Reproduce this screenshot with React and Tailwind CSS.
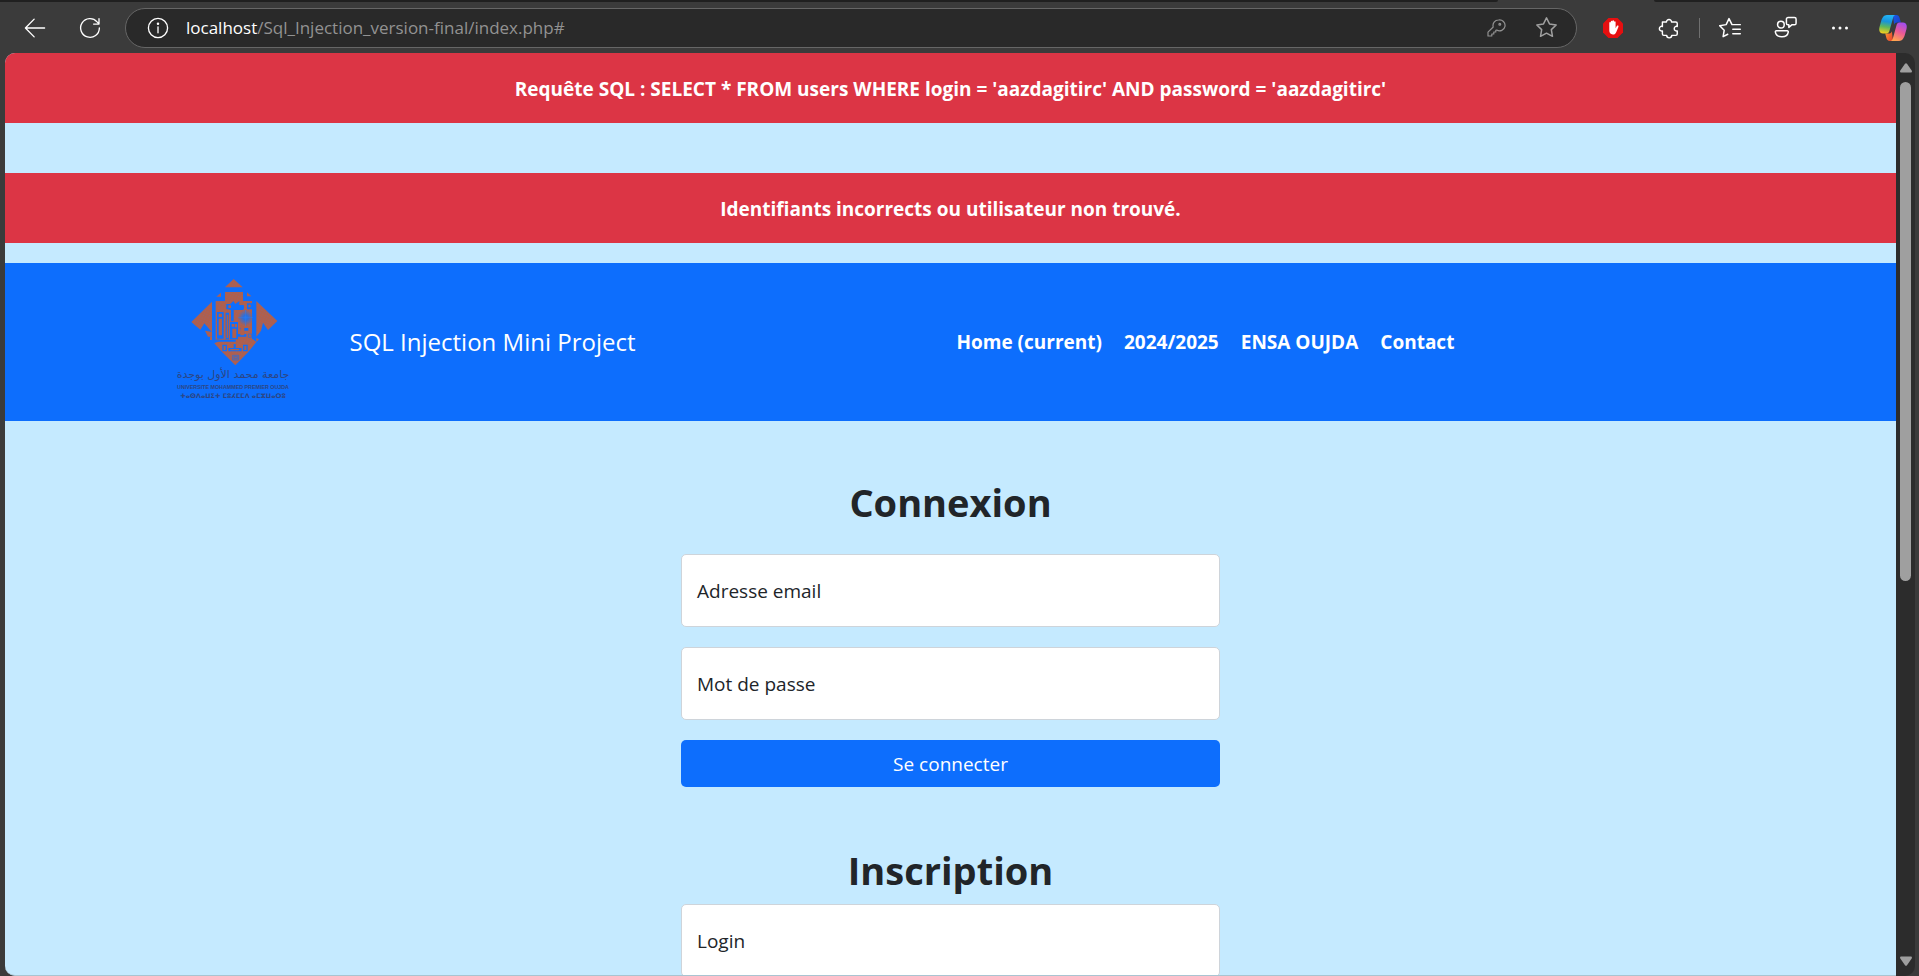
const SANS = "font-['Segoe_UI','Open_Sans','Noto_Sans',sans-serif]";

function IconButton({ label, className = "", children }) {
  return (
    <button type="button" aria-label={label} className={"flex size-8 items-center justify-center text-white " + className}>
      {children}
    </button>
  );
}

function Line({ size = 20, children, width = 1.3, className = "" }) {
  return (
    <svg width={size} height={size} viewBox="0 0 20 20" fill="none" stroke="currentColor" strokeWidth={width} strokeLinecap="round" strokeLinejoin="round" className={className} aria-hidden="true">
      {children}
    </svg>
  );
}

function Copilot() {
  return (
    <svg width="30" height="28" viewBox="0 0 30 28" aria-hidden="true">
      <defs>
        <linearGradient id="cp-a" x1="0.5" y1="0" x2="0.35" y2="1">
          <stop offset="0" stopColor="#23b4f5" />
          <stop offset="0.35" stopColor="#1793dc" />
          <stop offset="0.65" stopColor="#5fb85a" />
          <stop offset="1" stopColor="#f6cf1e" />
        </linearGradient>
        <linearGradient id="cp-b" x1="0" y1="0" x2="1" y2="1">
          <stop offset="0" stopColor="#1b57e8" />
          <stop offset="1" stopColor="#1a3fc4" />
        </linearGradient>
        <linearGradient id="cp-c" x1="0.7" y1="0" x2="0.3" y2="1">
          <stop offset="0" stopColor="#a24df0" />
          <stop offset="0.5" stopColor="#ec5a94" />
          <stop offset="1" stopColor="#ffa64e" />
        </linearGradient>
        <linearGradient id="cp-d" x1="0" y1="0" x2="1" y2="0.6">
          <stop offset="0" stopColor="#ff9a2e" />
          <stop offset="1" stopColor="#e9482f" />
        </linearGradient>
      </defs>
      <path d="M15 1h3.2c2 0 2.900 1.200 3.400 2.900l1.300 4.600h-3.700c-1.600 0-2.600.7-3.100 2.300z" fill="url(#cp-b)" />
      <path d="M15 27h-3.200c-2 0-2.900-1.200-3.400-2.900L7.200 19.500h3.600c1.600 0 2.600-.7 3.100-2.300z" fill="url(#cp-d)" />
      <path d="M17.200 1H8.900C5.800 1 4.200 3.800 3.200 7L1.500 13c-.9 3.500.2 6.500 3.400 6.500h3.700c1.500 0 2.400-1 2.800-2.500l3.500-12.600C15.400 2.500 16 1.300 17.200 1z" fill="url(#cp-a)" />
      <path d="M12.800 27h8.300c3.100 0 4.700-2.800 5.700-6l1.700-6c.9-3.500-.2-6.500-3.400-6.500h-3.700c-1.500 0-2.400 1-2.800 2.500l-3.500 12.600c-.5 1.900-1.100 3.100-2.300 3.400z" fill="url(#cp-c)" />
    </svg>
  );
}

function BrowserBar() {
  return (
    <header className="shrink-0 bg-[#3b3b3b]">
      <div className="flex h-[2px]">
        <div className="flex-1 rounded-br bg-[#202020]" />
        <div className="w-[156px]" />
        <div className="w-[265px] rounded-bl bg-[#202020]" />
      </div>
      <div className="flex h-[51px] items-center pr-[10px] pl-[19px]">
        <IconButton label="Retour">
          <Line size={24} width={1.1}><path d="M9.300 2.600 2 10l7.300 7.400M2.200 10H18" /></Line>
        </IconButton>
        <IconButton label="Actualiser" className="ml-[23px]">
          <Line size={24} width={1.1}><path d="M17.800 10A7.800 7.800 0 1 1 15.900 4.900L17.500 6.600M17.500 2.200v4.500h-4.500" /></Line>
        </IconButton>
        <div className="ml-[19px] flex h-10 min-w-0 flex-1 items-center rounded-full border border-[#666] bg-[#292929] pr-[14px] pl-4">
          <button type="button" aria-label="Informations sur le site" className="flex size-8 items-center justify-center text-white">
            <Line size={24} width={1.1}>
              <circle cx="10" cy="10" r="8" />
              <path d="M10 9v5" />
              <circle cx="10" cy="6.500" r="0.500" fill="currentColor" />
            </Line>
          </button>
          <div className="ml-3 min-w-0 flex-1 truncate text-[17px] leading-6 text-[#929292]">
            <span className="text-white">localhost</span>/Sql_Injection_version-final/index.php#
          </div>
          <IconButton label="Mots de passe" className="text-[#929292]!">
            <Line width={1.200}>
              <path d="M12.500 2a5.500 5.500 0 0 0-5.300 7L2 14.200V18h3.800v-2h2v-2h2v-1.600l.9-.3A5.500 5.500 0 1 0 12.500 2z" />
              <circle cx="13.800" cy="6.200" r="0.900" />
            </Line>
          </IconButton>
          <IconButton label="Ajouter aux favoris" className="ml-[18px] text-[#a0a0a0]!">
            <Line size={23}><path d="M10 1.600l2.600 5.300 5.800.85-4.200 4.100 1 5.800L10 14.900l-5.200 2.750 1-5.800-4.200-4.100 5.800-.85z" /></Line>
          </IconButton>
        </div>
        <IconButton label="Bloqueur de publicités" className="ml-5">
          <svg width="22" height="22" viewBox="0 0 22 22" aria-hidden="true">
            <path d="M6.500 1h9L21 6.500v9L15.500 21h-9L1 15.500v-9z" fill="#e60f10" />
            <path d="M7.300 11.500V5.800c0-1.100 1.500-1.100 1.500 0V4.500c0-1.100 1.600-1.100 1.600 0V4c0-1.100 1.600-1.100 1.600 0v1c0-1.100 1.600-1.100 1.600 0v6.300l1.200-2.200c.8-1 2.100-.4 1.600.8l-2.100 5c-.6 1.700-1.700 2.600-3.500 2.600-2.400 0-3.500-1.600-3.500-3.900z" fill="#fff" />
          </svg>
        </IconButton>
        <IconButton label="Extensions" className="ml-6">
          <Line size={22}>
            <path d="M4 4.500h3.700a2.300 2.300 0 1 1 4.600 0h3.900c.7 0 1.300.6 1.300 1.300v2.800a2.100 2.100 0 1 0 0 4v2.800c0 .7-.6 1.300-1.300 1.300h-3.700a2.300 2.300 0 1 1-4.600 0H5.300c-.7 0-1.300-.6-1.300-1.300v-2.800a2.100 2.100 0 1 1 0-4z" />
          </Line>
        </IconButton>
        <div className="ml-[14px] h-5 w-px bg-[#707070]" />
        <IconButton label="Favoris" className="ml-[14px]">
          <Line size={23}>
            <path d="M7.600 15.900 3.600 18l.9-5.600L.6 8.400l5.600-.9L8.700 2.300l2.600 5.200h7.200M12 11.500h6.500M12 15.500h6.500" />
          </Line>
        </IconButton>
        <IconButton label="Profil" className="ml-[23px]">
          <Line size={23}>
            <circle cx="6" cy="7.500" r="2.900" />
            <path d="M2 12.900h9.500c.6 0 1 .5.900 1.100-.4 2.400-2.300 4-5.400 4h-.4c-3.100 0-5-1.600-5.400-4-.1-.6.2-1.100.8-1.100z" />
            <path d="M12.200 1.300h5.600c.8 0 1.400.6 1.400 1.400v3.600c0 .8-.6 1.400-1.400 1.400h-2.300l-2.600 2.200V7.700h-.7c-.8 0-1.400-.6-1.400-1.400V2.700c0-.8.6-1.400 1.400-1.400z" />
          </Line>
        </IconButton>
        <IconButton label="Paramètres et plus" className="ml-[23px]">
          <svg width="18" height="4" viewBox="0 0 18 4" fill="currentColor" aria-hidden="true">
            <circle cx="2.500" cy="2" r="1.500" />
            <circle cx="9" cy="2" r="1.500" />
            <circle cx="15.500" cy="2" r="1.500" />
          </svg>
        </IconButton>
        <IconButton label="Copilot" className="ml-[21px]">
          <Copilot />
        </IconButton>
      </div>
    </header>
  );
}

function Alert({ children }) {
  return (
    <div role="alert" className="bg-[#dc3545] px-5 pt-[21px] pb-[19px] text-center text-[19px] leading-[30px] font-bold text-white">
      {children}
    </div>
  );
}

function UniversityLogo() {
  return (
    <svg width="124" height="130" viewBox="30 51 372 390" role="img" aria-label="Université Mohammed Premier Oujda">
      <defs>
        <pattern id="weave" width="8" height="8" patternUnits="userSpaceOnUse" patternTransform="rotate(25)">
          <rect width="8" height="8" fill="#b05f4c" />
          <rect width="3" height="3" fill="#96646f" />
        </pattern>
        <radialGradient id="glow">
          <stop offset="0" stopColor="#1b7dff" />
          <stop offset="0.300" stopColor="#2c6fdc" />
          <stop offset="1" stopColor="#2c6fdc" stopOpacity="0" />
        </radialGradient>
      </defs>
      <g fill="url(#weave)">
        <path d="M218 57l27 25h-53z" />
        <path d="M180 98v12h-14zM258 97v12h13z" />
        <path d="M192 96h54v27h27v27h-26v-14h-12l-7-7-8 9-8-9-7 7v14h-40v-26h27z" />
        <path d="M153 125v92l-23-27-12 19-27-23z" />
        <path d="M132 212l21 4v14h-12z" />
        <path d="M286 123l63 60-28 27-15-22-6 24-14 18z" />
        <path d="M164 124h28v26h81v90H164z" />
        <path d="M147 230h6v10h-6zM286 234l8 4-8 8z" />
        <path d="M160 250l26-12h90l10 8-25 31-38 39-39-39z" />
      </g>
      <g fill="#0d6efd">
        <path d="M168 156h20v80h-20zM194 158h10v80h-10zM210 150h8v34h-8zM207 186h24v52h-24zM238 204h24v8h-24zM164 239h60v6h-60zM228 222h28v8h-28z" />
        <path d="M196 132h12l9-9 6 9 12-9v13h14v12h-53zM258 130h15v18h-15z" />
        <path d="M184 254h14v20h-14zM202 264h40v10h-40zM246 254h14v20h-14zM218 252h6v14h-6z" />
      </g>
      <g fill="#b05f4c">
        <path d="M173 161h10v10h-10zM173 176h10v50h-10zM197 164h5v70h-5zM212 192h8v8h-8zM222 192h6v10h-6zM214 206h12v28h-12zM202 136h8v8h-8zM262 134h7v8h-7z" />
        <path d="M188 258h6v12h-6zM208 267h26v4h-26zM250 258h6v12h-6z" />
        <path d="M244 196l6 8v22h-12v-18z" />
      </g>
      <path d="M215 286h18v14h-18zM219 290h10v6h-10zM262 222h10v10h-10zM171 234v10M166 239h10" fill="none" stroke="#4a69b8" strokeWidth="3" />
      <circle cx="254" cy="173" r="24" fill="url(#glow)" />
      <path d="M254 150v48M232 173h44" stroke="#2f78ea" strokeWidth="2" />
      <g fill="#2c4685" textAnchor="middle">
        <text x="216" y="355" direction="rtl" fontFamily="'DejaVu Sans', sans-serif" fontSize="33">جامعة محمد الأول بوجدة</text>
        <text x="216" y="386" fontFamily="'Liberation Sans Narrow', 'Liberation Sans', sans-serif" fontWeight="700" fontSize="16">UNIVERSITE MOHAMMED PREMIER OUJDA</text>
        <text x="216" y="413" fontFamily="'DejaVu Sans', sans-serif" fontWeight="700" fontSize="19">ⵜⴰⵙⴷⴰⵡⵉⵜ ⵎⵓⵃⵎⵎⴷ ⴰⵎⵣⵡⴰⵔⵓ</text>
      </g>
    </svg>
  );
}

const links = ["Home (current)", "2024/2025", "ENSA OUJDA", "Contact"];

function Navbar() {
  return (
    <nav className="bg-[#0d6efd] py-[10px] text-white">
      <div className="mx-auto grid max-w-[1650px] grid-cols-2 items-center">
        <a href="#" className="flex h-[138px] items-center gap-[55px] pl-[45px] text-[24px] leading-9">
          <UniversityLogo />
          SQL Injection Mini Project
        </a>
        <ul className="flex gap-[22px] pl-[6px] text-[19px] leading-[30px] font-bold">
          {links.map((text) => (
            <li key={text}>
              <a href="#">{text}</a>
            </li>
          ))}
        </ul>
      </div>
    </nav>
  );
}

function Field({ id, label, type = "text" }) {
  return (
    <div className="relative">
      <input id={id} type={type} className="block h-[73px] w-full rounded-[5px] border border-[#ced4da] bg-white px-[15px] text-[19px] text-[#212529]" />
      <label htmlFor={id} className="absolute inset-y-0 left-4 flex items-center text-[19px] leading-[30px] text-[#212529]">
        {label}
      </label>
    </div>
  );
}

function Page() {
  return (
    <main className="min-w-0 flex-1 overflow-hidden rounded-l-[10px] border-b border-[#a9c4d1] bg-[#c5eaff]">
      <Alert>Requête SQL : SELECT * FROM users WHERE login = 'aazdagitirc' AND password = 'aazdagitirc'</Alert>
      <div className="mt-[50px] mb-5">
        <Alert>Identifiants incorrects ou utilisateur non trouvé.</Alert>
      </div>
      <Navbar />
      <div className="mx-auto w-full max-w-[539px] pt-[57px] text-[#212529]">
        <form onSubmit={(e) => e.preventDefault()} className="flex flex-col gap-5">
          <h1 className="mb-[8px] text-center text-[38px] leading-[48px] font-bold">Connexion</h1>
          <Field id="email" label="Adresse email" type="email" />
          <Field id="password" label="Mot de passe" type="password" />
          <button type="submit" className="h-[47px] rounded-[5px] bg-[#0d6efd] text-[19px] leading-[30px] text-white">
            Se connecter
          </button>
        </form>
        <form onSubmit={(e) => e.preventDefault()} className="mt-[59px] flex flex-col gap-[10px]">
          <h1 className="text-center text-[38px] leading-[48px] font-bold">Inscription</h1>
          <Field id="login" label="Login" />
        </form>
      </div>
    </main>
  );
}

function Scrollbar() {
  return (
    <div aria-hidden="true" className="flex w-[19px] shrink-0 flex-col items-center rounded-r-[10px] bg-[#2c2c2c] py-[10px]">
      <svg width="12" height="10" viewBox="0 0 12 10" fill="#9f9f9f"><path d="M5 .8c.5-.8 1.500-.8 2 0l4.700 6.800c.6.900.1 1.900-1 1.900H1.300c-1.100 0-1.600-1-1-1.900z" /></svg>
      <div className="mt-[9px] h-[499px] w-[11px] rounded-full bg-[#9f9f9f]" />
      <svg width="12" height="10" viewBox="0 0 12 10" fill="#9f9f9f" className="mt-auto"><path d="M5 9.200c.5.800 1.500.8 2 0l4.700-6.800c.6-.9.100-1.900-1-1.900H1.300C.2.500-.3 1.500.3 2.400z" /></svg>
    </div>
  );
}

export default function App() {
  return (
    <div className={"flex h-screen flex-col bg-[#3b3b3b] " + SANS}>
      <BrowserBar />
      <div className="flex min-h-0 flex-1 pr-1 pl-[5px]">
        <Page />
        <Scrollbar />
      </div>
    </div>
  );
}
